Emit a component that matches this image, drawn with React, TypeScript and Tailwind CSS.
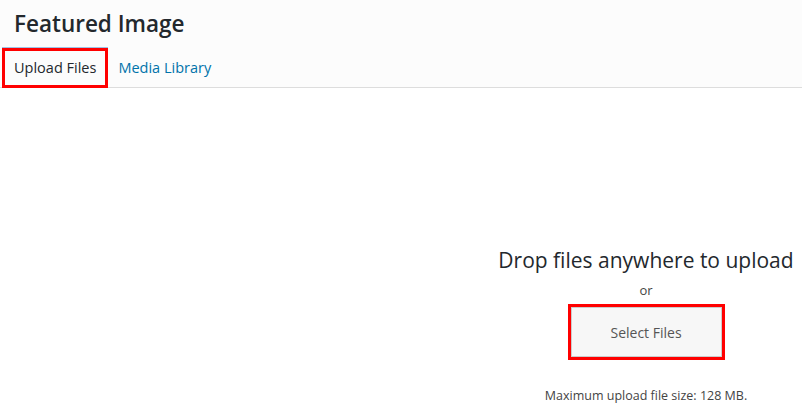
export default function App() {
  return (
    <div className="h-[410px] w-[802px] overflow-hidden bg-white font-['Open_Sans',sans-serif] text-[#23282d]">
      <div className="h-[88px] border-b border-[#dddddd] bg-[#fcfcfc]">
        <div className="flex h-[48px] items-center pl-[14px]">
          <h1 className="text-[22.5px] font-semibold leading-none">Featured Image</h1>
        </div>
        <div className="flex items-center pl-[2px]">
          <div className="relative z-10 flex h-[40px] items-center border-[3px] border-[#ff0000] px-[9px] text-[14.5px] shadow-[0_-1px_0_#9ec2e6]">
            Upload Files
          </div>
          <div className="flex h-[40px] items-center px-[10px] text-[14.5px] text-[#0073aa]">Media Library</div>
        </div>
      </div>
      <div className="ml-auto flex w-[312px] flex-col items-center pt-[157px]">
        <div className="text-[21px] leading-[30px]">Drop files anywhere to upload</div>
        <div className="mt-[6px] text-[13px] leading-[18px] text-[#444]">or</div>
        <div className="mt-[5px] border-[3px] border-[#ff0000]">
          <button className="flex h-[50px] w-[151px] items-center justify-center border border-[#cccccc] bg-[#f7f7f7] text-[14px] text-[#555]">
            Select Files
          </button>
        </div>
        <div className="mt-[27px] text-[12.5px] leading-[18px] text-[#444]">Maximum upload file size: 128 MB.</div>
      </div>
    </div>
  );
}
